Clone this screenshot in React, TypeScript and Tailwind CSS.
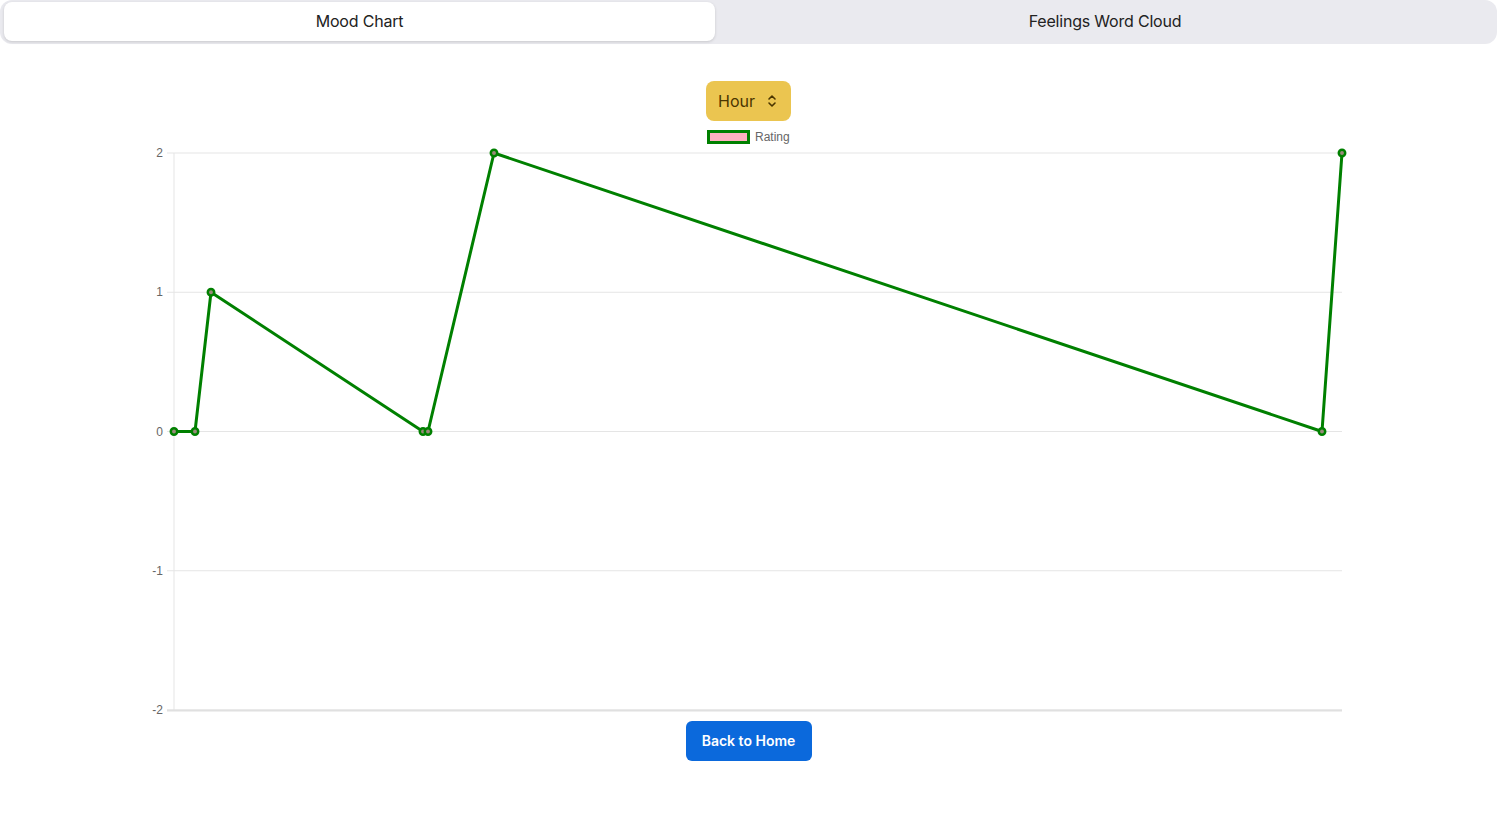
import React from "react";

const gridYs = [29, 168.25, 307.5, 446.75, 586];
const labels = ["2", "1", "0", "-1", "-2"];
const pts: [number, number][] = [
  [34, 307.5],
  [55, 307.5],
  [71, 168.25],
  [283, 307.5],
  [288, 307.5],
  [354, 29],
  [1182, 307.5],
  [1202, 29],
];

function Chart() {
  return (
    <svg width={1217} height={593} viewBox="0 0 1217 593" className="block">
      {/* legend */}
      <rect x={568.5} y={7.5} width={40} height={11} fill="#ffb1c1" stroke="#008000" strokeWidth={3} />
      <text x={615} y={17} fontSize={12} fill="#666" fontFamily="'Liberation Sans', Arial, sans-serif">
        Rating
      </text>
      {/* grid */}
      {gridYs.map((y, i) => (
        <g key={i}>
          <line x1={27} x2={1202} y1={y} y2={y} stroke="#e5e5e5" strokeWidth={1} />
          <text
            x={23}
            y={y + 4}
            fontSize={12}
            textAnchor="end"
            fill="#666"
            fontFamily="'Liberation Sans', Arial, sans-serif"
          >
            {labels[i]}
          </text>
        </g>
      ))}
      <line x1={34} x2={34} y1={29} y2={586} stroke="#e5e5e5" strokeWidth={1} />
      <line x1={27} x2={1202} y1={586.5} y2={586.5} stroke="#e0e0e0" strokeWidth={2} />
      <polyline
        points={pts.map((p) => p.join(",")).join(" ")}
        fill="none"
        stroke="#008000"
        strokeWidth={3}
        strokeLinejoin="round"
      />
      {pts.map(([x, y], i) => (
        <circle key={i} cx={x} cy={y} r={3.2} fill="#9a8a7a" stroke="#008000" strokeWidth={2.5} />
      ))}
    </svg>
  );
}

export default function App() {
  return (
    <div className="min-h-screen bg-white" style={{ fontFamily: "Inter, 'Noto Sans', sans-serif" }}>
      <div className="flex h-[44px] w-full rounded-xl bg-[#eaeaef] p-[2px] pl-[4px]">
        <button className="flex h-[39px] w-[711px] items-center justify-center rounded-lg bg-white pb-[2px] text-[16px] tracking-[-0.2px] text-[#222] shadow-[0_1px_3px_rgba(0,0,0,0.15)]">
          Mood Chart
        </button>
        <button className="flex h-[39px] flex-1 items-center justify-center pb-[2px] text-[16px] tracking-[-0.2px] text-[#222]">
          Feelings Word Cloud
        </button>
      </div>
      <div className="flex flex-col items-center">
        <button className="mt-[37px] flex h-[40px] w-[85px] items-center gap-[12px] rounded-lg bg-[#ebc550] pl-[12px] text-[16px] text-[#4a3500]">
          <span>Hour</span>
          <svg width="10" height="14" viewBox="0 0 10 14" fill="none" stroke="#4a3500" strokeWidth="1.6" strokeLinecap="round" strokeLinejoin="round">
            <path d="M2 5 L5 2 L8 5" />
            <path d="M2 9 L5 12 L8 9" />
          </svg>
        </button>
        <div className="mt-[3px]">
          <Chart />
        </div>
        <button className="mt-[4px] flex h-[40px] w-[126px] items-center justify-center rounded-md bg-[#0b69dc] pb-[1px] text-[14px] font-semibold text-white">
          Back to Home
        </button>
      </div>
    </div>
  );
}
